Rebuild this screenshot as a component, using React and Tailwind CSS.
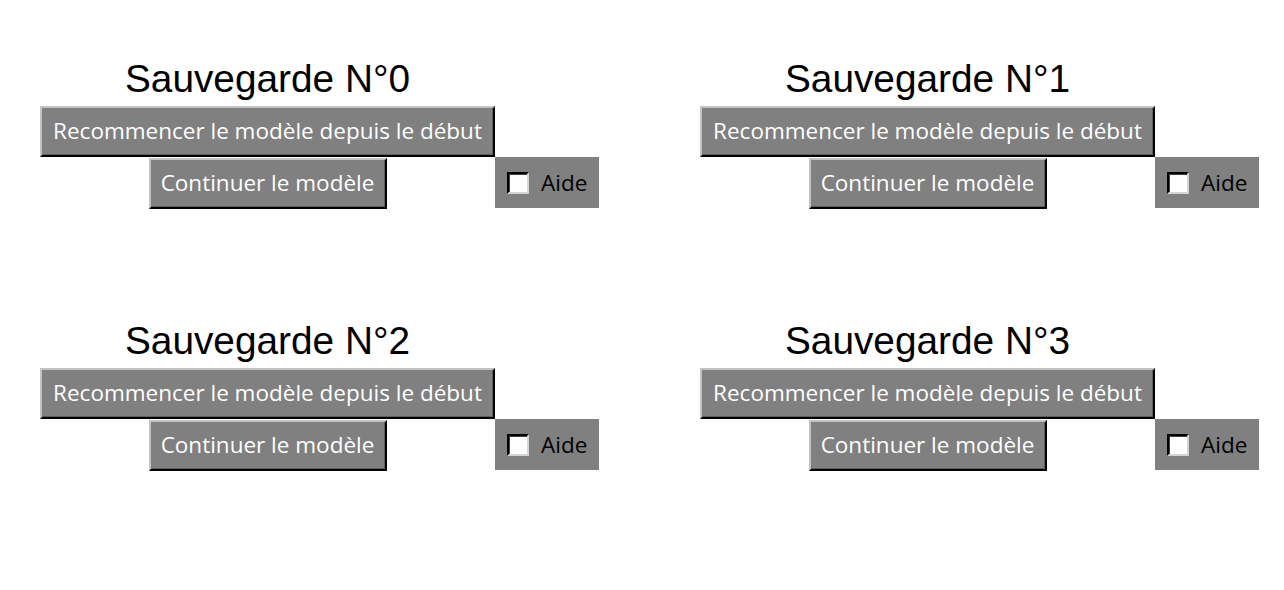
import React from 'react';

const saves = [0, 1, 2, 3];

function TkButton({ label, width }) {
  return (
    <button
      type="button"
      className={`${width} h-[51px] bg-[#808080] text-white text-[22.5px] leading-none border-2 border-t-[#c3c3c3] border-l-[#c3c3c3] border-b-black border-r-black shadow-[inset_-1px_-1px_0_#5f5f5f] flex items-center justify-center`}
      style={{ fontFamily: '"Open Sans", "Noto Sans", sans-serif' }}
    >
      {label}
    </button>
  );
}

function SaveSlot({ n }) {
  return (
    <div className="grid grid-cols-[455px_104px]">
      <div
        className="h-[44px] pb-[10px] flex items-center justify-center text-[38.8px] text-black leading-none"
        style={{ fontFamily: '"Liberation Sans", Arial, sans-serif' }}
      >
        Sauvegarde N°{n}
      </div>
      <div />
      <TkButton label="Recommencer le modèle depuis le début" width="w-[455px]" />
      <div />
      <div className="flex justify-center pt-px">
        <TkButton label="Continuer le modèle" width="w-[238px]" />
      </div>
      <label
        className="h-[51px] bg-[#808080] flex items-center pl-3 gap-3 text-[22.5px] text-black"
        style={{ fontFamily: '"Open Sans", "Noto Sans", sans-serif' }}
      >
        <span className="w-[22px] h-[22px] bg-white border-2 border-t-black border-l-black border-b-[#d4d4d4] border-r-[#d4d4d4] shadow-[inset_1px_1px_0_#404040]" />
        Aide
      </label>
    </div>
  );
}

export default function App() {
  return (
    <div className="w-[1284px] h-[590px] bg-white pt-[62px] pl-[40px]">
      <div className="grid grid-cols-[559px_559px] gap-x-[101px] gap-y-[115px]">
        {saves.map((n) => (
          <SaveSlot key={n} n={n} />
        ))}
      </div>
    </div>
  );
}
